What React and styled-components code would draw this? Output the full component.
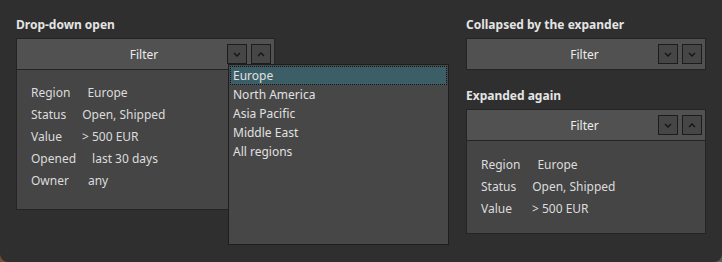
import React from 'react';
import styled, { createGlobalStyle } from 'styled-components';

const Global = createGlobalStyle`
  html, body { margin: 0; padding: 0; }
  body {
    background: linear-gradient(90deg, #7a4e36 0%, #5b5b5b 100%);
    font-family: "Segoe UI", "Noto Sans", "Open Sans", sans-serif;
    font-size: 12px;
    color: #e2e2e2;
  }
`;

// ventana principal con esquinas inferiores redondeadas
const Window = styled.div`
  width: 722px;
  height: 262px;
  box-sizing: border-box;
  background: #2f2f2f;
  border-radius: 0 0 8px 8px;
  padding: 16px 16px 0 16px;
  display: flex;
  gap: 191px;
`;

const Column = styled.div`
  display: flex;
  flex-direction: column;
  width: ${p => p.$w}px;
`;

const Title = styled.div`
  font-weight: 700;
  font-size: 12px;
  line-height: 18px;
  color: #e4e4e4;
  margin: ${p => p.$top || 0}px 0 4px 0;
`;

const Expander = styled.div`
  position: relative;
  border: 1px solid #242424;
  background: #454545;
`;

const Header = styled.div`
  display: grid;
  grid-template-columns: 1fr auto 1fr;
  align-items: center;
  height: 30px;
  background: #515151;
  padding-right: 3px;
  ${p => p.$open && 'border-bottom: 1px solid #242424;'}
`;

const HeaderText = styled.span`
  grid-column: 2;
  color: #ececec;
  font-size: 12px;
`;

const Buttons = styled.div`
  grid-column: 3;
  justify-self: end;
  display: flex;
  gap: 4px;
`;

const ArrowButton = styled.button`
  width: 20px;
  height: 20px;
  padding: 0;
  margin: 0;
  display: flex;
  align-items: center;
  justify-content: center;
  background: #464646;
  border: 1px solid #1c1c1c;
`;

const Body = styled.div`
  padding: ${p => p.$pad};
  display: flex;
  flex-direction: column;
`;

const Row = styled.div`
  display: flex;
  gap: ${p => p.$gap}px;
  height: 22px;
  align-items: center;
  color: #dcdcdc;
`;

const Dropdown = styled.ul`
  position: absolute;
  left: 211px;
  top: 25px;
  width: 217px;
  height: 177px;
  margin: 0;
  padding: 1px;
  list-style: none;
  background: #474747;
  border: 1px solid #1e1e1e;
  z-index: 2;
`;

const Option = styled.li`
  height: 19px;
  line-height: 19px;
  padding-left: 3px;
  box-sizing: border-box;
  font-size: 12px;
  color: #e0e0e0;
  ${p => p.$selected && `
    background: #3c5e67;
    outline: 1px dotted #101010;
    outline-offset: -1px;
  `}
`;

const Chevron = ({ up }) => (
  <svg width="8" height="5" viewBox="0 0 8 5">
    <path d={up ? 'M1 4 L4 1 L7 4' : 'M1 1 L4 4 L7 1'} fill="none" stroke="#141414" strokeWidth="1.4" />
  </svg>
);

const FilterHeader = ({ open, second }) => (
  <Header $open={open}>
    <HeaderText>Filter</HeaderText>
    <Buttons>
      <ArrowButton><Chevron /></ArrowButton>
      <ArrowButton><Chevron up={second} /></ArrowButton>
    </Buttons>
  </Header>
);

const rows = [
  ['Region', 'Europe', 17],
  ['Status', 'Open, Shipped', 16],
  ['Value', '> 500 EUR', 20],
  ['Opened', 'last 30 days', 16],
  ['Owner', 'any', 19],
];

const regions = ['Europe', 'North America', 'Asia Pacific', 'Middle East', 'All regions'];

export default function App() {
  return (
    <>
      <Global />
      <Window>
        <Column $w={259}>
          <Title>Drop-down open</Title>
          <Expander>
            <FilterHeader open second />
            <Body $pad="11px 14px 18px 14px">
              {rows.map(([k, v, g]) => (
                <Row key={k} $gap={g}><span>{k}</span><span>{v}</span></Row>
              ))}
            </Body>
            <Dropdown>
              {regions.map((r, i) => (
                <Option key={r} $selected={i === 0}>{r}</Option>
              ))}
            </Dropdown>
          </Expander>
        </Column>
        <Column $w={240}>
          <Title>Collapsed by the expander</Title>
          <Expander>
            <FilterHeader />
          </Expander>
          <Title $top={17}>Expanded again</Title>
          <Expander>
            <FilterHeader open second />
            <Body $pad="12px 14px 14px 14px">
              {rows.slice(0, 3).map(([k, v, g]) => (
                <Row key={k} $gap={g}><span>{k}</span><span>{v}</span></Row>
              ))}
            </Body>
          </Expander>
        </Column>
      </Window>
    </>
  );
}
